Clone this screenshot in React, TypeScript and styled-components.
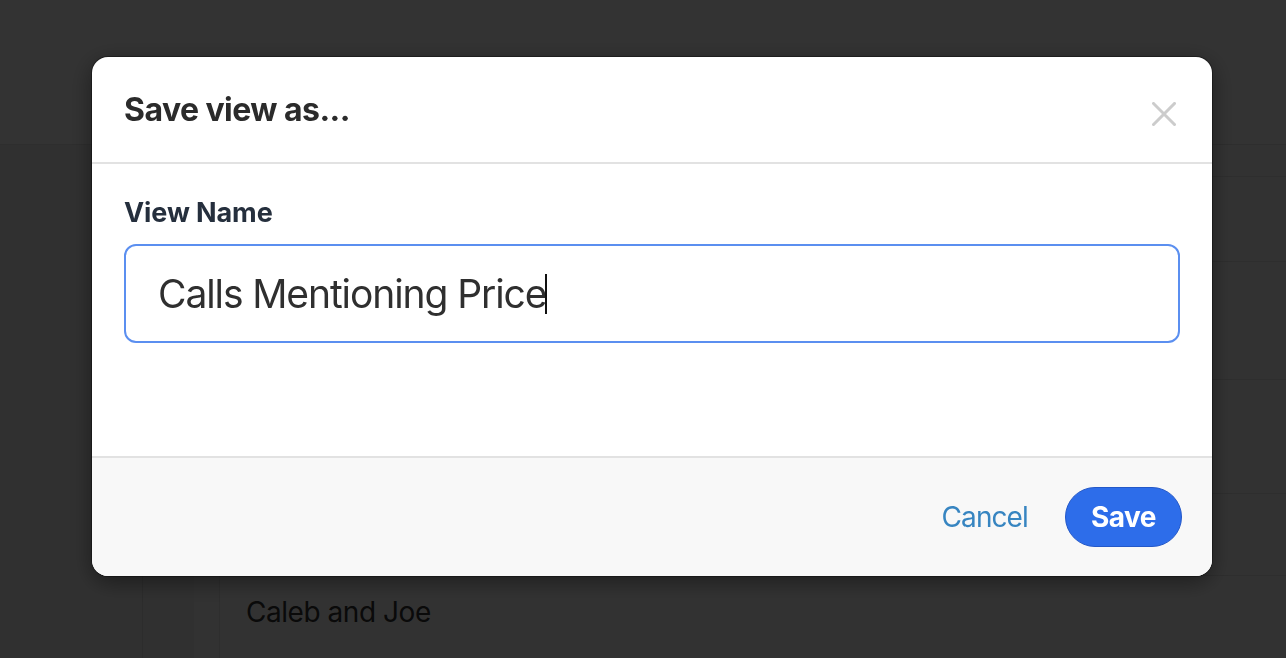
import { useState } from 'react';
import styled, { createGlobalStyle } from 'styled-components';

const GlobalStyle = createGlobalStyle`
  html, body {
    margin: 0;
    padding: 0;
    height: 100%;
    overflow: hidden;
  }
  body {
    font-family: Inter, "Liberation Sans", Arial, sans-serif;
    background: #ffffff;
  }
  * { box-sizing: border-box; }
`;

const rows = [
  { height: 32, label: '' },
  { height: 85, label: '' },
  { height: 118, label: '' },
  { height: 114, label: '' },
  { height: 82, label: '' },
  { height: 90, label: 'Caleb and Joe' },
];

function Page() {
  return (
    <PageWrap>
      <TopBar />
      <Content>
        <Sidebar />
        <Rail>
          <RailStrip />
        </Rail>
        <Main>
          {rows.map((r, i) => (
            <Row key={i} $h={r.height}>{r.label}</Row>
          ))}
        </Main>
      </Content>
    </PageWrap>
  );
}

function CloseIcon() {
  return (
    <svg width="24" height="24" viewBox="0 0 24 24" fill="none">
      <path d="M1.5 1.5 L22.5 22.5 M22.5 1.5 L1.5 22.5" stroke="#cccccc" strokeWidth="3" strokeLinecap="square" />
    </svg>
  );
}

function SaveViewModal() {
  const [name, setName] = useState('Calls Mentioning Price');

  return (
    <Overlay>
      <Modal>
        <Header>
          <Title>Save view as...</Title>
          <CloseButton type="button" aria-label="Close"><CloseIcon /></CloseButton>
        </Header>
        <Body>
          <Label htmlFor="view-name">View Name</Label>
          <InputBox>
            <Input id="view-name" value={name} size={name.length} onChange={e => setName(e.target.value)} />
            <Caret />
          </InputBox>
        </Body>
        <Footer>
          <CancelButton type="button">Cancel</CancelButton>
          <SaveButton type="button">Save</SaveButton>
        </Footer>
      </Modal>
    </Overlay>
  );
}

export default function App() {
  return (
    <>
      <GlobalStyle />
      <Page />
      <SaveViewModal />
    </>
  );
}

/* background page */

const PageWrap = styled.div`
  height: 100vh;
  display: flex;
  flex-direction: column;
`;

const TopBar = styled.header`
  height: 145px;
  flex-shrink: 0;
  background: #ffffff;
  border-bottom: 1px solid #e4e4e4;
`;

const Content = styled.div`
  flex: 1;
  display: flex;
`;

const Sidebar = styled.aside`
  width: 143px;
  background: #f1f1f1;
  border-right: 1px solid #dcdcdc;
`;

const Rail = styled.div`
  width: 77px;
  display: flex;
  justify-content: flex-end;
  background: #f1f1f1;
  border-right: 1px solid #e6e6e6;
`;

const RailStrip = styled.div`
  width: 25px;
  background: #f8f8f8;
`;

const Main = styled.main`
  flex: 1;
  background: #fbfbfb;
`;

const Row = styled.div<{ $h: number }>`
  height: ${p => p.$h}px;
  border-bottom: 1px solid #e6e6e6;
  display: flex;
  align-items: flex-start;
  padding: 19px 0 0 26px;
  font-size: 28px;
  line-height: 34px;
  letter-spacing: -0.45px;
  color: #333333;
`;

/* modal */

const Overlay = styled.div`
  position: fixed;
  inset: 0;
  background: rgba(0, 0, 0, 0.8);
  display: flex;
  align-items: flex-start;
  padding: 57px 74px 0 92px;
`;

const Modal = styled.div`
  flex: 1;
  background: #ffffff;
  border-radius: 16px;
  overflow: hidden;
  box-shadow: 0 0 0 1px rgba(0, 0, 0, 0.35), 0 6px 24px rgba(0, 0, 0, 0.45);
`;

const Header = styled.div`
  height: 107px;
  display: flex;
  align-items: center;
  justify-content: space-between;
  padding: 0 36px 0 32px;
  border-bottom: 2px solid #e2e2e2;
`;

const Title = styled.h2`
  margin: 0;
  font-size: 32px;
  font-weight: 700;
  color: #2b2b2b;
  letter-spacing: -0.55px;
`;

const CloseButton = styled.button`
  border: none;
  background: transparent;
  padding: 0;
  margin-top: 8px;
  width: 24px;
  height: 24px;
  cursor: pointer;
  display: flex;
`;

const Body = styled.div`
  height: 294px;
  padding: 32px 32px 0;
  border-bottom: 2px solid #e2e2e2;
`;

const Label = styled.label`
  display: block;
  font-size: 27px;
  line-height: 34px;
  font-weight: 700;
  color: #252f3d;
  letter-spacing: -0.1px;
`;

const InputBox = styled.div`
  margin-top: 14px;
  height: 99px;
  border: 2px solid #5b8ff0;
  border-radius: 12px;
  display: flex;
  align-items: center;
  padding: 0 32px;
`;

const Input = styled.input`
  border: none;
  outline: none;
  padding: 0;
  background: transparent;
  font-family: inherit;
  font-size: 39px;
  letter-spacing: -1.1px;
  color: #2f2f2f;
  field-sizing: content;
  caret-color: transparent;
`;

const Caret = styled.span`
  width: 2px;
  height: 40px;
  background: #111111;
  margin-left: -1px;
`;

const Footer = styled.div`
  height: 118px;
  background: #f8f8f8;
  display: flex;
  align-items: center;
  justify-content: flex-end;
  gap: 37px;
  padding-right: 30px;
`;

const CancelButton = styled.button`
  border: none;
  background: transparent;
  padding: 0;
  font-family: inherit;
  font-size: 28px;
  letter-spacing: -0.9px;
  color: #3785c1;
  cursor: pointer;
`;

const SaveButton = styled.button`
  height: 60px;
  padding: 0 25px;
  border-radius: 30px;
  border: 1px solid #2458c8;
  background: #2d6dea;
  color: #ffffff;
  font-family: inherit;
  font-size: 28px;
  font-weight: 700;
  letter-spacing: -0.5px;
  cursor: pointer;
`;
